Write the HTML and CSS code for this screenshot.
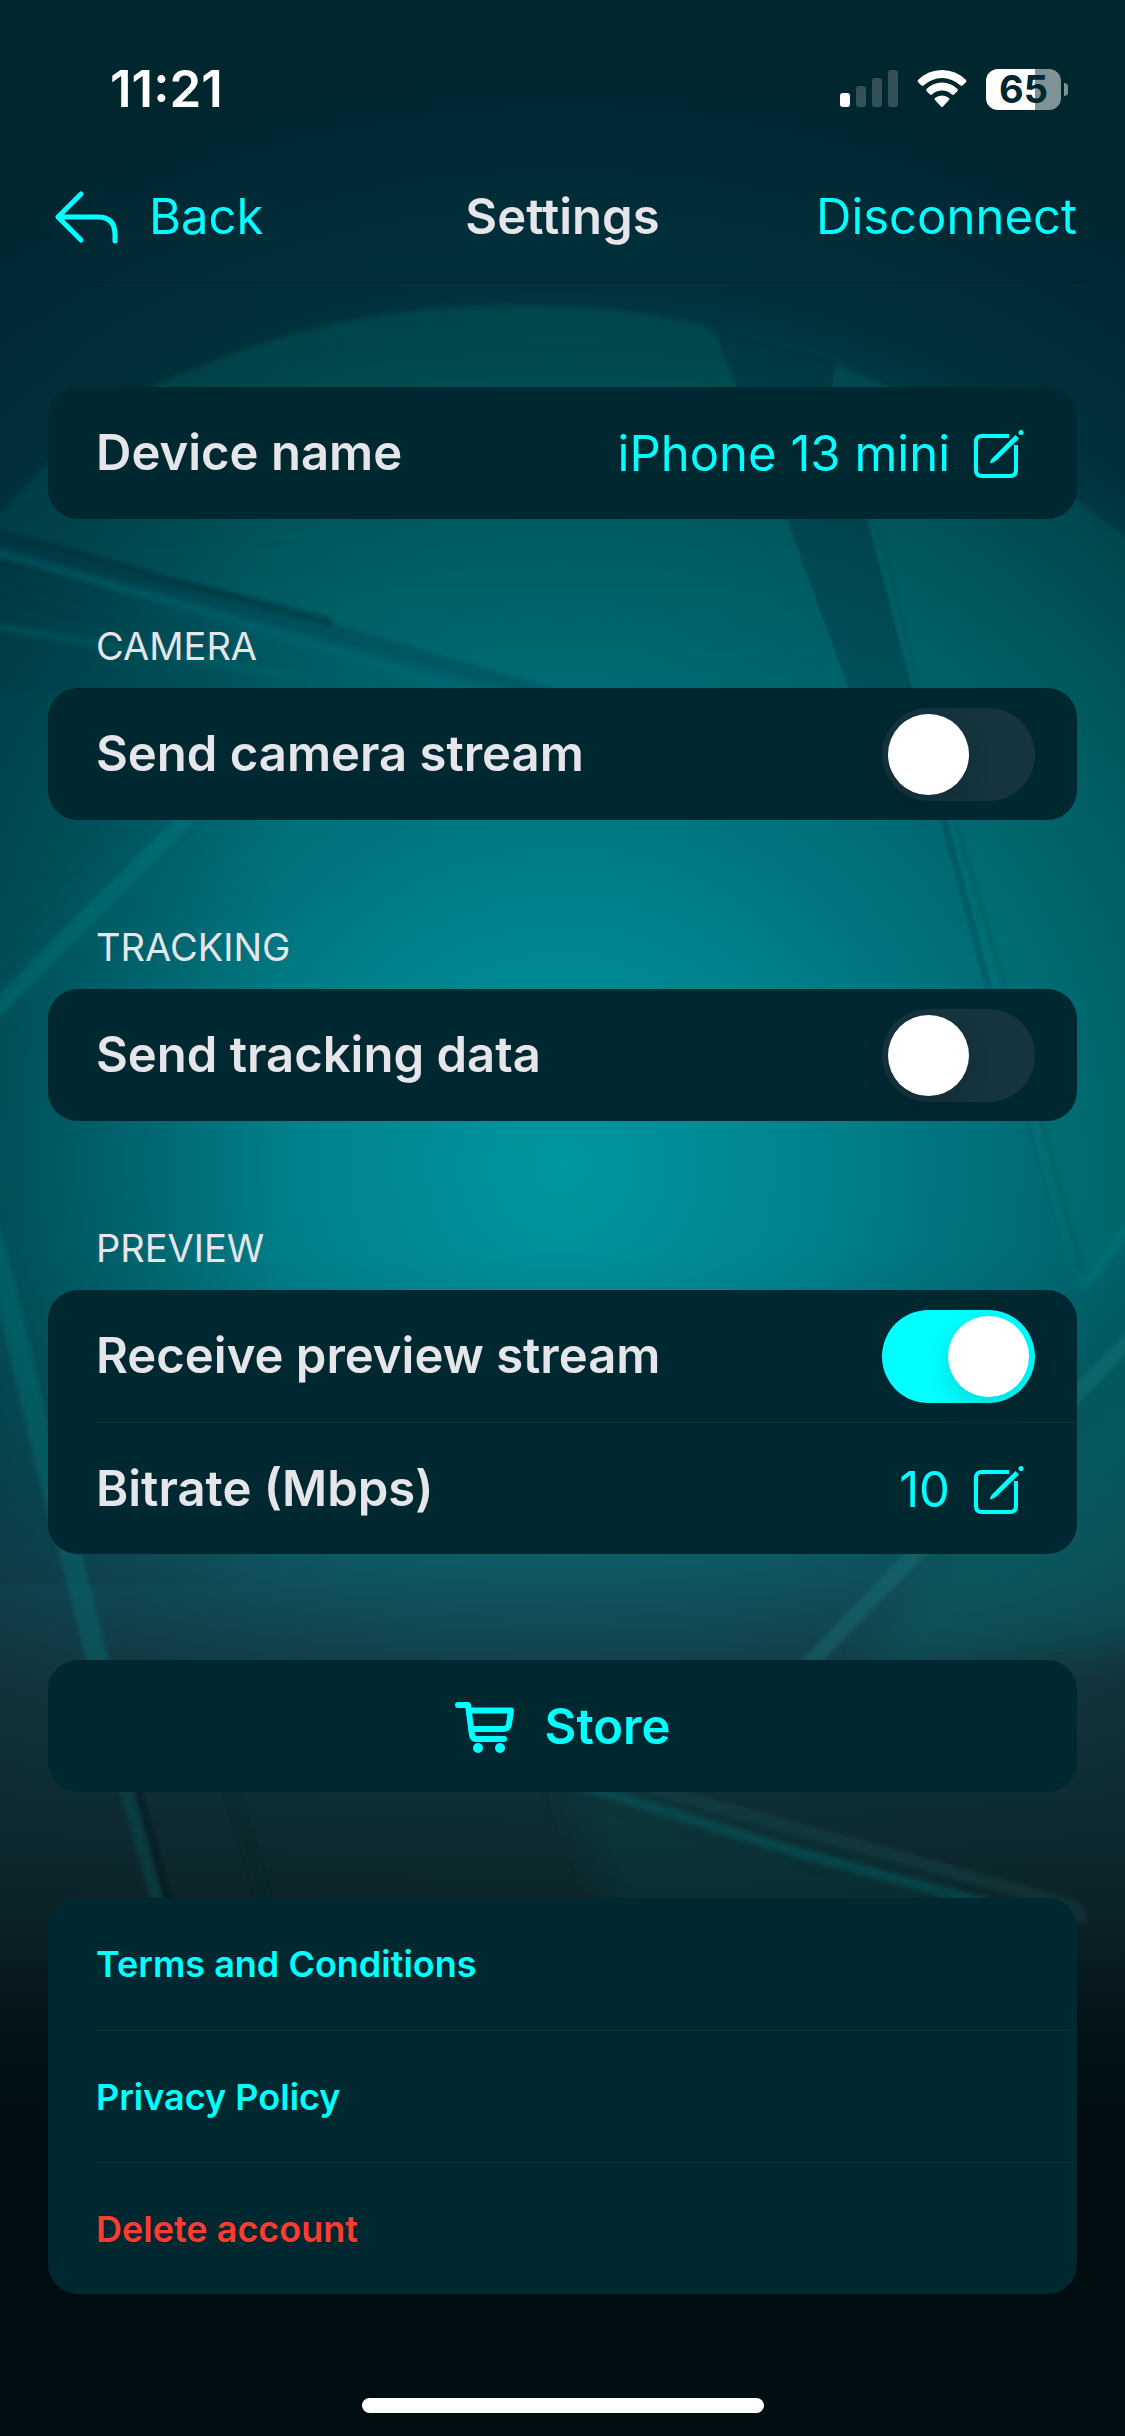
FILE: index.html
```html
<!DOCTYPE html>
<html lang="en">

<head>
    <meta charset="utf-8">
    <meta name="viewport" content="width=device-width, initial-scale=1">
    <title>Settings</title>
    <link rel="stylesheet" href="styles.css">
</head>

<body>
    <!-- aperture blades behind the page -->
    <svg class="backdrop" viewBox="0 0 1125 2436" preserveAspectRatio="xMidYMid slice" aria-hidden="true">
        <defs>
            <radialGradient id="glow" gradientUnits="userSpaceOnUse" cx="562" cy="1165" r="1130">
                <stop offset="0" stop-color="#0098a1" />
                <stop offset="0.2" stop-color="#00858f" />
                <stop offset="0.42" stop-color="#006b75" />
                <stop offset="0.6" stop-color="#00525b" />
                <stop offset="0.78" stop-color="#00323c" />
                <stop offset="0.9" stop-color="#002a35" />
                <stop offset="1" stop-color="#00262e" />
            </radialGradient>
            <linearGradient id="side" x1="0" x2="1" y1="0" y2="0">
                <stop offset="0" stop-color="#002a35" stop-opacity="0.3" />
                <stop offset="0.25" stop-color="#002a35" stop-opacity="0" />
            </linearGradient>
            <linearGradient id="fade" gradientUnits="userSpaceOnUse" x1="0" x2="0" y1="1250" y2="2200">
                <stop offset="0" stop-color="#142428" stop-opacity="0" />
                <stop offset="0.33" stop-color="#262c3a" stop-opacity="0.35" />
                <stop offset="0.45" stop-color="#1c2a32" stop-opacity="0.65" />
                <stop offset="0.58" stop-color="#0f2a30" stop-opacity="0.9" />
                <stop offset="0.7" stop-color="#0c2226" stop-opacity="0.95" />
                <stop offset="0.8" stop-color="#05151a" stop-opacity="1" />
                <stop offset="0.92" stop-color="#000e12" stop-opacity="1" />
                <stop offset="1" stop-color="#000e12" stop-opacity="1" />
            </linearGradient>
            <linearGradient id="bladeTop" gradientUnits="userSpaceOnUse" x1="0" x2="0" y1="300" y2="760">
                <stop offset="0" stop-color="#00675f" stop-opacity="0.32" />
                <stop offset="1" stop-color="#008080" stop-opacity="0" />
            </linearGradient>
            <linearGradient id="gap" gradientUnits="userSpaceOnUse" x1="0" x2="0" y1="500" y2="1260">
                <stop offset="0" stop-color="#003d48" stop-opacity="0.6" />
                <stop offset="0.45" stop-color="#003d48" stop-opacity="0.3" />
                <stop offset="1" stop-color="#003d48" stop-opacity="0.1" />
            </linearGradient>
            <filter id="soft" filterUnits="userSpaceOnUse" x="-60" y="200" width="1245" height="2100">
                <feGaussianBlur stdDeviation="2" />
            </filter>
            <filter id="softer" filterUnits="userSpaceOnUse" x="-60" y="200" width="1245" height="2100">
                <feGaussianBlur stdDeviation="18" />
            </filter>
        </defs>
        <rect width="1125" height="2436" fill="url(#glow)" />
        <rect y="284" width="1125" height="1300" fill="url(#side)" />
        <g filter="url(#soft)">
            <path d="M-40 560C60 440 120 400 180 375C300 322 410 305 530 305C600 306 660 315 702 325Q714 329 717 340L737 387L850 688L620 705L-40 520Z" fill="url(#bladeTop)" />
            <path d="M832 387Q832 362 842 366Q990 432 1125 537L1170 560L1170 1200L1084 1291Q1076 1294 1073 1280L993 989L912 688Z" fill="#007a78" fill-opacity="0.22" />
            <path d="M878 519L928 730L1006 989L1082 1270" fill="none" stroke="#004852" stroke-opacity="0.3" stroke-width="5" />
            <path d="M1084 1288L1160 1180" stroke="#108086" stroke-opacity="0.3" stroke-width="8" />
            <path d="M-40 541L535 705L610 705L330 622L-40 515Z" fill="#003c46" fill-opacity="0.3" />
            <path d="M-40 542L300 638L530 700" fill="none" stroke="#00747a" stroke-opacity="0.35" stroke-width="10" />
            <path d="M-40 520L160 578L332 622" fill="none" stroke="#002e38" stroke-opacity="0.45" stroke-width="10" />
            <path d="M-40 620L120 648L300 676Q314 679 315 692" fill="none" stroke="#007a7e" stroke-opacity="0.3" stroke-width="8" />
            <path d="M190 815L90 915L-40 1045" fill="none" stroke="#008a88" stroke-opacity="0.3" stroke-width="16" />
        </g>
        <g filter="url(#softer)">
            <path d="M-60 570L480 705L-60 705Z" fill="#003842" fill-opacity="0.25" />
            <path d="M-60 700L300 700L180 800L-60 1020Z" fill="#00424c" fill-opacity="0.25" />
        </g>
        <path d="M787 519L867 519L912 688L993 989L1075 1288L985 989L940 820L848 688Z" fill="url(#gap)" />
        <path d="M717 330L737 387L832 387L836 362Z" fill="#002c36" fill-opacity="0.1" />
        <rect y="1250" width="1125" height="1186" fill="url(#fade)" />
        <g filter="url(#soft)">
            <path d="M-20 1200L4 1285L48 1470L75 1570L102 1680" fill="none" stroke="#0c8184" stroke-opacity="0.3" stroke-width="22" />
            <path d="M120 1770L158 1905" fill="none" stroke="#0c6a6d" stroke-opacity="0.25" stroke-width="12" />
            <path d="M133 1770L169 1905" stroke="#02171d" stroke-opacity="0.6" stroke-width="6" />
            <path d="M228 1780L266 1905" stroke="#02171d" stroke-opacity="0.25" stroke-width="16" />
            <path d="M1160 1310L1070 1400L915 1554L805 1668" fill="none" stroke="#218a8c" stroke-opacity="0.25" stroke-width="16" />
            <path d="M580 1785L800 1853L1000 1907" fill="none" stroke="#10696b" stroke-opacity="0.4" stroke-width="11" />
            <path d="M650 1788L860 1846L1070 1905Q1080 1910 1080 1922" fill="none" stroke="#1d5a5c" stroke-opacity="0.22" stroke-width="14" />
        </g>
        <g filter="url(#softer)">
            <path d="M950 1554L1160 1365L1160 1640L860 1670Z" fill="#008078" fill-opacity="0.22" />
            <path d="M560 1780L800 1848L1000 1902L900 1920L620 1920Z" fill="#0b5357" fill-opacity="0.2" />
        </g>
    </svg>

    <div class="screen">
        <div class="status">
            <span class="time">11:21</span>
            <div class="indicators">
                <svg class="signal" viewBox="0 0 58 38" aria-hidden="true">
                    <rect x="0" y="23" width="10" height="14" rx="3" />
                    <rect class="off" x="16" y="16" width="10" height="21" rx="3" />
                    <rect class="off" x="32" y="8" width="10" height="29" rx="3" />
                    <rect class="off" x="48" y="0" width="10" height="37" rx="3" />
                </svg>
                <svg class="wifi" viewBox="0 0 50 38" aria-hidden="true">
                    <path d="M1 10Q11 0 25 0Q39 0 49 10Q50 11 49 12L45.500 15.500Q44.500 16 43.500 15.500Q35 8 25 8Q15 8 6.500 15.500Q5.500 16 4.500 15.500L1 12Q0 11 1 10Z" />
                    <path d="M9.500 19Q16 12.500 25 12.500Q34 12.500 40.500 19Q41 20 40.500 21L37 24.500Q36 25 35 24.500Q31 20.500 25 20.500Q19 20.500 15 24.500Q14 25 13 24.500L9.500 21Q9 20 9.500 19Z" />
                    <path d="M18 28Q21 25.500 25 25.500Q29 25.500 32 28Q33 29 32 30L26 36.500Q25 37.500 24 36.500L18 30Q17 29 18 28Z" />
                </svg>
                <span class="battery">65</span>
            </div>
        </div>

        <header class="nav">
            <button class="nav-button" type="button">
                <svg class="back-icon" viewBox="0 0 75 54" aria-hidden="true">
                    <path d="M33 4L10 27L33 50M10 27H50Q67 27 67 45V51" />
                </svg>
                Back
            </button>
            <h1>Settings</h1>
            <button class="nav-button nav-right" type="button">Disconnect</button>
        </header>

        <main>
            <section class="card">
                <div class="row">
                    <span id="device">Device name</span>
                    <button class="value" type="button" aria-describedby="device">
                        iPhone 13 mini
                        <svg class="edit-icon" viewBox="0 0 50 50" aria-hidden="true">
                            <path d="M35 7H8Q2 7 2 13V41Q2 47 8 47H36Q42 47 42 41V16" />
                            <path class="pencil" d="M41.500 6L45 9.500L23 31Q20 34 16 34.500Q16 31 19.500 28Z" />
                            <circle class="pencil" cx="47" cy="3.500" r="2.500" />
                        </svg>
                    </button>
                </div>
            </section>

            <h2>CAMERA</h2>
            <section class="card">
                <div class="row">
                    <label for="camera">Send camera stream</label>
                    <input class="switch" type="checkbox" id="camera">
                </div>
            </section>

            <h2>TRACKING</h2>
            <section class="card">
                <div class="row">
                    <label for="tracking">Send tracking data</label>
                    <input class="switch" type="checkbox" id="tracking">
                </div>
            </section>

            <h2>PREVIEW</h2>
            <section class="card">
                <div class="row">
                    <label for="preview">Receive preview stream</label>
                    <input class="switch" type="checkbox" id="preview" checked>
                </div>
                <div class="row">
                    <span id="bitrate">Bitrate (Mbps)</span>
                    <button class="value" type="button" aria-describedby="bitrate">
                        10
                        <svg class="edit-icon" viewBox="0 0 50 50" aria-hidden="true">
                            <path d="M35 7H8Q2 7 2 13V41Q2 47 8 47H36Q42 47 42 41V16" />
                            <path class="pencil" d="M41.500 6L45 9.500L23 31Q20 34 16 34.500Q16 31 19.500 28Z" />
                            <circle class="pencil" cx="47" cy="3.500" r="2.500" />
                        </svg>
                    </button>
                </div>
            </section>

            <button class="card store" type="button">
                <svg class="cart-icon" viewBox="0 0 60 52" aria-hidden="true">
                    <path d="M3 4H13L17 34Q18 38 21 38H49M14 9.500H56L54 23Q53 28 49 28H17" />
                    <circle cx="23" cy="47" r="5" />
                    <circle cx="45" cy="47" r="5" />
                </svg>
                Store
            </button>

            <nav class="card links">
                <a class="row" href="#terms">Terms and Conditions</a>
                <a class="row" href="#privacy">Privacy Policy</a>
                <button class="row danger" type="button">Delete account</button>
            </nav>
        </main>

        <div class="home-bar"></div>
    </div>
</body>

</html>
```

FILE: styles.css
```css
:root {
    --bg: #000e12;
    --card: #002831;
    --accent: #00ffff;
    --text: #e5e5ea;
    --danger: #ff3b30;
    --line: #0d303a;
}

* {
    box-sizing: border-box;
}

body {
    margin: 0;
    background-color: var(--bg);
    color: var(--text);
    font-family: Inter, "Liberation Sans", sans-serif;
    font-size: 49px;
    line-height: 60px;
}

button {
    padding: 0;
    border: 0;
    background: none;
    color: var(--accent);
    font: inherit;
}

.backdrop {
    position: absolute;
    inset: 0;
    width: 100%;
    height: 100%;
    z-index: -1;
}

.screen {
    display: flex;
    flex-direction: column;
    min-height: 100vh;
}

.status {
    display: flex;
    align-items: center;
    justify-content: space-between;
    height: 150px;
    padding: 28px 57px 0 110px;
    color: white;
}

.time {
    font-size: 51px;
    font-weight: 600;
}

.indicators {
    display: flex;
    align-items: center;
    gap: 19px;
}

.signal {
    width: 58px;
    height: 38px;
    fill: white;
}

.off {
    opacity: 0.2;
}

.wifi {
    width: 50px;
    height: 38px;
    fill: white;
}

.battery {
    position: relative;
    width: 75px;
    height: 41px;
    margin-right: 7px;
    border-radius: 12px;
    background: linear-gradient(to right, white 65%, #7f9397 65%);
    color: #00262e;
    font-size: 38px;
    font-weight: 700;
    line-height: 41px;
    text-align: center;
}

.battery::after {
    content: "";
    position: absolute;
    top: 14px;
    right: -7px;
    width: 4px;
    height: 13px;
    border-radius: 0 4px 4px 0;
    background-color: #7f9397;
}

.nav {
    display: grid;
    grid-template-columns: 1fr auto 1fr;
    align-items: center;
    height: 133px;
    padding: 2px 48px 0;
    border-bottom: 1px solid #00222a;
}

.nav-button {
    display: flex;
    align-items: center;
    gap: 26px;
    justify-self: start;
}

.nav-right {
    justify-self: end;
}

.back-icon {
    width: 75px;
    height: 54px;
    fill: none;
    stroke: var(--accent);
    stroke-width: 5;
    stroke-linecap: round;
    stroke-linejoin: round;
}

h1 {
    margin: 0;
    font-size: 49px;
    font-weight: 600;
}

main {
    display: flex;
    flex-direction: column;
    padding: 104px 48px;
}

.card {
    border-radius: 30px;
    background-color: var(--card);
}

h2 {
    margin: 103px 48px 18px;
    font-size: 38px;
    font-weight: 400;
    line-height: 48px;
}

.row {
    display: flex;
    align-items: center;
    justify-content: space-between;
    height: 132px;
    margin-left: 48px;
    padding-right: 42px;
    font-weight: 600;
}

.row + .row {
    border-top: 1px solid var(--line);
}

.value {
    display: flex;
    align-items: center;
    gap: 24px;
    padding: 2px 11px 0 0;
    font-weight: 400;
}

.edit-icon {
    width: 50px;
    height: 50px;
    fill: none;
    stroke: var(--accent);
    stroke-width: 4;
}

.edit-icon .pencil {
    fill: var(--accent);
    stroke: none;
}

.switch {
    appearance: none;
    display: flex;
    width: 153px;
    height: 93px;
    margin: 0;
    padding: 6px;
    border-radius: 47px;
    background-color: #15343e;
}

.switch::before {
    content: "";
    width: 81px;
    height: 81px;
    border-radius: 50%;
    background-color: white;
    box-shadow: 0 9px 24px rgba(0, 0, 0, 0.15);
}

.switch:checked {
    justify-content: flex-end;
    background-color: var(--accent);
}

.store {
    display: flex;
    align-items: center;
    justify-content: center;
    gap: 30px;
    height: 132px;
    margin: 106px 0;
    padding-top: 2px;
    font-weight: 600;
}

.cart-icon {
    width: 60px;
    height: 52px;
    fill: var(--accent);
}

.cart-icon path {
    fill: none;
    stroke: var(--accent);
    stroke-width: 6;
    stroke-linecap: round;
    stroke-linejoin: round;
}

.links {
    display: flex;
    flex-direction: column;
}

.links .row {
    color: var(--accent);
    font-size: 36px;
    text-decoration: none;
}

.links .danger {
    color: var(--danger);
}

.home-bar {
    width: 402px;
    height: 15px;
    margin: auto auto 24px;
    border-radius: 8px;
    background-color: white;
}
```
